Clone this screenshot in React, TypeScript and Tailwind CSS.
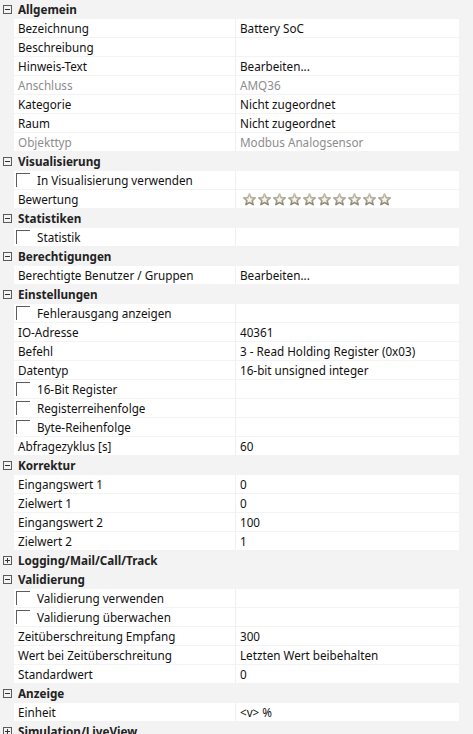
import React from "react";

type Row =
  | { kind: "group"; label: string; open: boolean }
  | { kind: "prop"; label: string; value?: string; disabled?: boolean; check?: boolean; stars?: boolean };

const rows: Row[] = [
  { kind: "group", label: "Allgemein", open: true },
  { kind: "prop", label: "Bezeichnung", value: "Battery SoC" },
  { kind: "prop", label: "Beschreibung" },
  { kind: "prop", label: "Hinweis-Text", value: "Bearbeiten..." },
  { kind: "prop", label: "Anschluss", value: "AMQ36", disabled: true },
  { kind: "prop", label: "Kategorie", value: "Nicht zugeordnet" },
  { kind: "prop", label: "Raum", value: "Nicht zugeordnet" },
  { kind: "prop", label: "Objekttyp", value: "Modbus Analogsensor", disabled: true },
  { kind: "group", label: "Visualisierung", open: true },
  { kind: "prop", label: "In Visualisierung verwenden", check: true },
  { kind: "prop", label: "Bewertung", stars: true },
  { kind: "group", label: "Statistiken", open: true },
  { kind: "prop", label: "Statistik", check: true },
  { kind: "group", label: "Berechtigungen", open: true },
  { kind: "prop", label: "Berechtigte Benutzer / Gruppen", value: "Bearbeiten..." },
  { kind: "group", label: "Einstellungen", open: true },
  { kind: "prop", label: "Fehlerausgang anzeigen", check: true },
  { kind: "prop", label: "IO-Adresse", value: "40361" },
  { kind: "prop", label: "Befehl", value: "3 - Read Holding Register (0x03)" },
  { kind: "prop", label: "Datentyp", value: "16-bit unsigned integer" },
  { kind: "prop", label: "16-Bit Register", check: true },
  { kind: "prop", label: "Registerreihenfolge", check: true },
  { kind: "prop", label: "Byte-Reihenfolge", check: true },
  { kind: "prop", label: "Abfragezyklus [s]", value: "60" },
  { kind: "group", label: "Korrektur", open: true },
  { kind: "prop", label: "Eingangswert 1", value: "0" },
  { kind: "prop", label: "Zielwert 1", value: "0" },
  { kind: "prop", label: "Eingangswert 2", value: "100" },
  { kind: "prop", label: "Zielwert 2", value: "1" },
  { kind: "group", label: "Logging/Mail/Call/Track", open: false },
  { kind: "group", label: "Validierung", open: true },
  { kind: "prop", label: "Validierung verwenden", check: true },
  { kind: "prop", label: "Validierung überwachen", check: true },
  { kind: "prop", label: "Zeitüberschreitung Empfang", value: "300" },
  { kind: "prop", label: "Wert bei Zeitüberschreitung", value: "Letzten Wert beibehalten" },
  { kind: "prop", label: "Standardwert", value: "0" },
  { kind: "group", label: "Anzeige", open: true },
  { kind: "prop", label: "Einheit", value: "<v> %" },
  { kind: "group", label: "Simulation/LiveView", open: false },
];

function Toggle({ open }: { open: boolean }) {
  return (
    <svg width="9" height="9" viewBox="0 0 9 9" className="block">
      <rect x="0.5" y="0.5" width="8" height="8" fill="none" stroke="#5a5a5a" />
      <line x1="2" y1="4.5" x2="7" y2="4.5" stroke="#333" />
      {!open && <line x1="4.5" y1="2" x2="4.5" y2="7" stroke="#333" />}
    </svg>
  );
}

function Star() {
  return (
    <svg width="13" height="13" viewBox="0 0 24 24" className="block">
      <defs>
        <linearGradient id="sg" x1="0" y1="0" x2="0" y2="1">
          <stop offset="0" stopColor="#c9c4b4" />
          <stop offset="1" stopColor="#8c8670" />
        </linearGradient>
      </defs>
      <path
        d="M12 1.5l3.1 7 7.4.6-5.6 4.9 1.7 7.4L12 17.5l-6.6 3.9 1.7-7.4L1.5 9.1l7.4-.6z"
        fill="#f4f2ea"
        stroke="url(#sg)"
        strokeWidth="3"
        strokeLinejoin="round"
      />
    </svg>
  );
}

export default function App() {
  return (
    <div
      className="w-[473px] h-[734px] overflow-hidden bg-[#f3f3f3] text-[11.7px] leading-[18px] text-[#111]"
      style={{ fontFamily: '"Segoe UI", "Noto Sans", sans-serif' }}
    >
      {rows.map((r, i) =>
        r.kind === "group" ? (
          <div key={i} className="flex h-[19px] items-start">
            <div className="w-[14px] h-[18px] flex items-center pl-[3px]">
              <Toggle open={r.open} />
            </div>
            <div className="pl-[4px] font-bold text-[#222]">{r.label}</div>
          </div>
        ) : (
          <div key={i} className="flex h-[19px] pl-[14px] pr-[14px]">
            <div className="flex h-[18px] w-full bg-white">
              <div className="flex w-[222px] items-center border-r border-[#f0f0f0]">
                {r.check ? (
                  <>
                    <span className="ml-[2px] w-[14px] h-[14px] border-t border-l border-[#5c5c5c]" />
                    <span className="pl-[7px]">{r.label}</span>
                  </>
                ) : (
                  <span className={`pl-[4px] ${r.disabled ? "text-[#8d8d8d]" : ""}`}>{r.label}</span>
                )}
              </div>
              <div className={`flex flex-1 items-center pl-[4px] ${r.disabled ? "text-[#8d8d8d]" : ""}`}>
                {r.stars ? (
                  <div className="flex gap-[2px] pl-[3px] pt-px">
                    {Array.from({ length: 10 }).map((_, k) => (
                      <Star key={k} />
                    ))}
                  </div>
                ) : (
                  r.value
                )}
              </div>
            </div>
          </div>
        )
      )}
    </div>
  );
}
